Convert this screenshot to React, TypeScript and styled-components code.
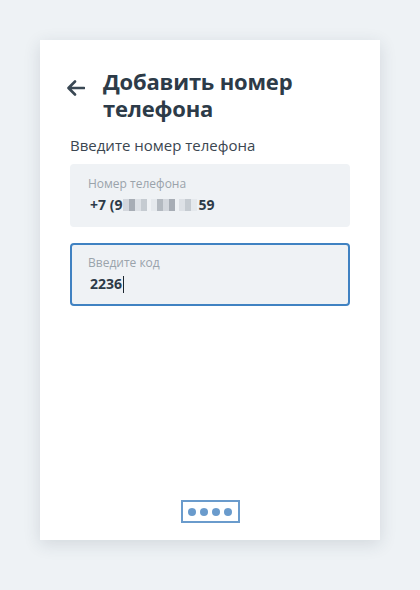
import React from "react";
import styled, { createGlobalStyle } from "styled-components";

const GlobalStyle = createGlobalStyle`
  body {
    margin: 0;
    background: #eef2f5;
    font-family: "Open Sans", "Noto Sans", sans-serif;
  }
`;

const mosaic = ["#c9ced4", "#9fa6ae", "#e2e5e9", "#b7bdc4", "#d7dbe0", "#8f969f"];

export default function App() {
  return (
    <Page>
      <GlobalStyle />
      <Card>
        <Header>
          <BackButton aria-label="Назад">
            <svg width="18" height="16" viewBox="0 0 18 16" fill="none">
              <path
                d="M17 8H2M8 1.5L1.5 8L8 14.5"
                stroke="#3a4854"
                strokeWidth="2.6"
                strokeLinecap="round"
                strokeLinejoin="round"
              />
            </svg>
          </BackButton>
          <Title>Добавить номер телефона</Title>
        </Header>
        <Hint>Введите номер телефона</Hint>
        <Field>
          <Label>Номер телефона</Label>
          <Value>
            +7 (9
            <Mosaic>
              {[0, 1, 2, 3, 4, 5, 6, 7, 8, 9, 10].map((i) => (
                <Pixel key={i} color={mosaic[(i * 5) % mosaic.length]} gap={i === 3 || i === 7} />
              ))}
            </Mosaic>
            59
          </Value>
        </Field>
        <Field active>
          <Label>Введите код</Label>
          <Value>
            2236<Caret />
          </Value>
        </Field>
        <Footer>
          <CodeIcon>
            <Dot />
            <Dot />
            <Dot />
            <Dot />
          </CodeIcon>
        </Footer>
      </Card>
    </Page>
  );
}

const Page = styled.div`
  padding: 40px;
`;

const Card = styled.div`
  width: 340px;
  height: 500px;
  box-sizing: border-box;
  background: #ffffff;
  box-shadow: 0 4px 16px rgba(40, 60, 80, 0.14);
  padding: 28px 30px 17px;
  display: flex;
  flex-direction: column;
`;

const Header = styled.div`
  display: flex;
  align-items: flex-start;
  gap: 18px;
  margin-left: -3px;
`;

const BackButton = styled.button`
  border: none;
  background: none;
  padding: 0;
  margin-top: 12px;
  width: 18px;
  height: 16px;
  cursor: pointer;
  display: flex;
`;

const Title = styled.h1`
  margin: 0;
  font-size: 22px;
  line-height: 27px;
  font-weight: 700;
  color: #2d3b48;
  width: 240px;
  letter-spacing: -0.2px;
`;

const Hint = styled.div`
  margin-top: 14px;
  font-size: 15px;
  line-height: 19px;
  color: #3b4650;
`;

const Field = styled.div<{ active?: boolean }>`
  margin-top: ${({ active }) => (active ? "16px" : "9px")};
  height: 63px;
  box-sizing: border-box;
  background: #eff2f5;
  border-radius: 4px;
  border: 2px solid ${({ active }) => (active ? "#4082c2" : "#eff2f5")};
  padding: 10px 16px 0 16px;
`;

const Label = styled.div`
  font-size: 12px;
  line-height: 15px;
  color: #9aa3ab;
`;

const Value = styled.div`
  margin-top: 5px;
  font-size: 14px;
  line-height: 18px;
  font-weight: 700;
  color: #2d3b48;
  display: flex;
  align-items: center;
  padding-left: 2px;
`;

const Mosaic = styled.span`
  display: inline-flex;
  height: 12px;
  margin: 0 1px;
`;

const Pixel = styled.span<{ color: string; gap?: boolean }>`
  width: 6px;
  height: 12px;
  background: ${({ color }) => color};
  margin-right: ${({ gap }) => (gap ? "4px" : "0")};
  opacity: 0.75;
`;

const Caret = styled.span`
  width: 1px;
  height: 17px;
  background: #1c2630;
  margin-left: 1px;
`;

const Footer = styled.div`
  margin-top: auto;
  display: flex;
  justify-content: center;
`;

const CodeIcon = styled.div`
  width: 59px;
  height: 23px;
  box-sizing: border-box;
  border: 2px solid #6a9bcc;
  display: flex;
  align-items: center;
  justify-content: center;
  gap: 4px;
`;

const Dot = styled.span`
  width: 8px;
  height: 8px;
  border-radius: 50%;
  background: #6a9bcc;
`;
